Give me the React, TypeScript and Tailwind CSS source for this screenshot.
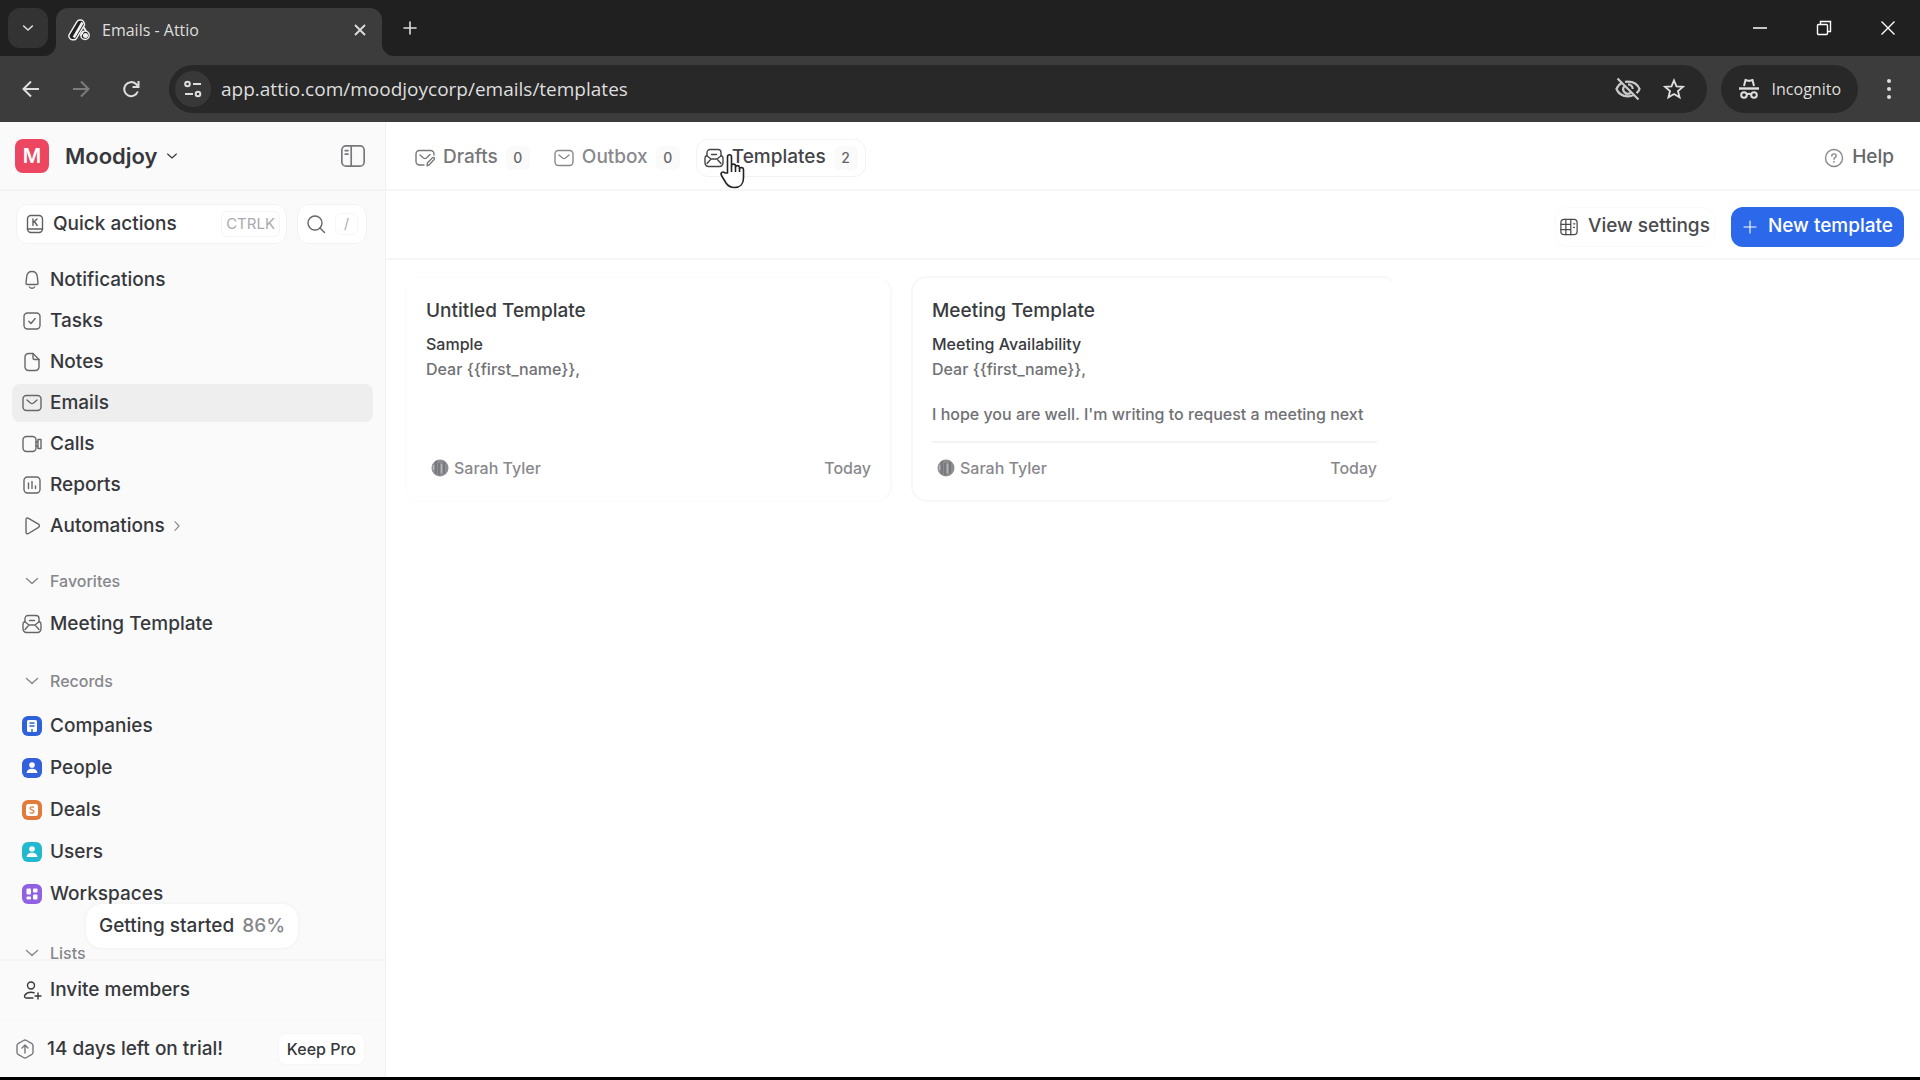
import React from 'react';

type IconName =
    | 'bell' | 'task' | 'note' | 'mail' | 'call' | 'report' | 'play' | 'template'
    | 'draft' | 'search' | 'help' | 'panel' | 'settings' | 'quick' | 'invite' | 'trial'
    | 'chevronDown' | 'chevronRight' | 'plus';

// All outline icons share a 20x20 grid
const iconShapes: Record<IconName, React.ReactNode> = {
    bell: <path d="M10 1.500c-3 0-5 2.200-5.300 5L4 13c-.1 1 .3 1.500 1 1.500h10c.7 0 1.100-.5 1-1.500l-.7-6.500c-.3-2.800-2.300-5-5.300-5ZM7.500 17c.6 1 1.500 1.300 2.500 1.300s1.900-.3 2.500-1.300" />,
    task: <><rect x="2" y="2" width="16" height="16" rx="3.500" /><path d="m6.800 10.300 2.200 2.200 4.200-5" /></>,
    note: <><path d="M11 1.500H6.500a3.500 3.500 0 0 0-3.500 3.500v10a3.500 3.500 0 0 0 3.500 3.500h7a3.500 3.500 0 0 0 3.500-3.500V7.500Z" /><path d="M11 1.500V6c0 1 .5 1.500 1.500 1.500H17" /></>,
    mail: <><rect x="1" y="2.500" width="18" height="15" rx="3.500" /><path d="m5 7 3.500 3c1 .8 2 .8 3 0L15 7" /></>,
    call: <><rect x="1" y="2.500" width="13" height="15" rx="3.500" /><path d="m14 8.500 2-1.500v6l-2-1.500M16 5.500h3v9h-3Z" /></>,
    report: <><rect x="2" y="2" width="16" height="16" rx="3.500" /><path d="M6.500 8v5.500M10 6.500v7M13.500 11v2.500" /></>,
    play: <path d="M4 3.800c0-1.500 1.200-2.200 2.500-1.500l10 5.900c1.300.8 1.300 2.300 0 3.100l-10 6.200c-1.300.8-2.500 0-2.500-1.500Z" />,
    template: <><path d="M3 8V4.500A3 3 0 0 1 6 1.500h8a3 3 0 0 1 3 3V8" /><path d="M2.500 7.500 7 11h6l4.500-3.500c.9.5 1.500 1.500 1.500 2.700V15a3.500 3.500 0 0 1-3.500 3.500h-11A3.500 3.500 0 0 1 1 15v-4.800c0-1.200.6-2.200 1.500-2.700ZM7 11l-4 4.500M13 11l4 4.500M7.500 6.500h5" /></>,
    draft: <><path d="M9 17H4.500A3.500 3.500 0 0 1 1 13.500V6a3.500 3.500 0 0 1 3.500-3.500h11A3.500 3.500 0 0 1 19 6v1" /><path d="m5 7 3.500 3c1 .8 2 .8 3 0L15 6.500M12 17.800l.5-3 5-5c1.200-1 2.700.5 1.700 1.700l-5 5.300Z" /></>,
    search: <><circle cx="9" cy="9" r="7" /><path d="m14 14 4.500 4.500" /></>,
    help: <><circle cx="10" cy="10" r="8.500" /><path d="M7.800 8c0-1.300 1-2.100 2.200-2.100s2.200.8 2.200 2c0 1.400-2.200 1.600-2.200 3.300M10 13.500v.8" /></>,
    panel: <><rect x=".7" y="1.500" width="18.600" height="17" rx="3.500" /><path d="M8.500 1.500v17M3.500 5.500h2.300M3.500 8.500h2.300" /></>,
    settings: <><rect x="1" y="1.500" width="18" height="17" rx="3.500" /><path d="M6.500 1.500v17M12 1.500v17M1 7h11M1 13h11M15 6.500h1.500M15 10.500h1" /></>,
    quick: <><rect x="2.500" y="1.500" width="15" height="17" rx="3.500" /><path d="M2.500 15h15M8 5v6.500M12 5 8 8.800M9.500 7.500l2.700 4" /></>,
    invite: <><circle cx="9" cy="5.500" r="3.500" /><path d="M11 18H4.500C2.500 18 2 16.500 3 15c1.200-1.800 3.500-2.800 6-2.800 1.300 0 2.300.2 3.200.6M16 13v6M13 16h6" /></>,
    trial: <><path d="M8.500 1.500a3 3 0 0 1 3 0l5 2.800A3 3 0 0 1 18 7v6a3 3 0 0 1-1.500 2.700l-5 2.800a3 3 0 0 1-3 0l-5-2.800A3 3 0 0 1 2 13V7a3 3 0 0 1 1.500-2.700Z" /><path d="M10 14V6.500M7 9l3-3 3 3" /></>,
    chevronDown: <path d="m4.500 7.500 5.500 5 5.500-5" />,
    chevronRight: <path d="m7.500 4.500 5 5.500-5 5.500" />,
    plus: <path d="M10 2.500v15M2.500 10h15" />,
};

const Icon: React.FC<{ name: IconName; className?: string }> = ({ name, className = 'size-5' }) => (
    <svg
        className={`shrink-0 ${className}`}
        viewBox="0 0 20 20"
        fill="none"
        stroke="currentColor"
        strokeWidth={1.4}
        strokeLinecap="round"
        strokeLinejoin="round"
        aria-hidden="true"
    >
        {iconShapes[name]}
    </svg>
);

const navItems: { label: string; icon: IconName; active?: boolean; nested?: boolean }[] = [
    { label: 'Notifications', icon: 'bell' },
    { label: 'Tasks', icon: 'task' },
    { label: 'Notes', icon: 'note' },
    { label: 'Emails', icon: 'mail', active: true },
    { label: 'Calls', icon: 'call' },
    { label: 'Reports', icon: 'report' },
    { label: 'Automations', icon: 'play', nested: true },
];

const person = <><circle cx="10" cy="7" r="2.800" /><path d="M4.500 15c.3-2.800 2.500-4.300 5.500-4.300s5.200 1.500 5.500 4.300Z" /></>;

const records = [
    {
        label: 'Companies',
        color: 'bg-[#2f62da]',
        glyph: <><rect x="5" y="4" width="10" height="12" rx="1.500" /><path d="M7.500 7h5M7.500 10h5M10 13v3" stroke="#2f62da" strokeWidth="1.400" /></>,
    },
    { label: 'People', color: 'bg-[#3560dc]', glyph: person },
    {
        label: 'Deals',
        color: 'bg-[#e07b3c]',
        glyph: <><rect x="4" y="4" width="12" height="12" rx="2.500" /><path d="M12 7.500c-.8-1-4-.9-4 .8 0 2 4 1.200 4 3.200 0 1.800-3.200 2-4.200.8" fill="none" stroke="#e07b3c" strokeWidth="1.300" /></>,
    },
    { label: 'Users', color: 'bg-[#22b8cf]', glyph: person },
    {
        label: 'Workspaces',
        color: 'bg-[#9061e0]',
        glyph: <><rect x="4.500" y="4.500" width="4.500" height="6" rx="1" /><rect x="11" y="4.500" width="4.500" height="4" rx="1" /><rect x="4.500" y="12.500" width="4.500" height="3" rx="1" /><rect x="11" y="10.500" width="4.500" height="5" rx="1" /></>,
    },
];

const tabs: { label: string; icon: IconName; count: number; style: string }[] = [
    { label: 'Drafts', icon: 'draft', count: 0, style: 'border-transparent text-[#77787b]' },
    { label: 'Outbox', icon: 'mail', count: 0, style: 'border-transparent text-[#88898c]' },
    { label: 'Templates', icon: 'template', count: 2, style: 'border-[#f3f3f4] text-[#444548]' },
];

const templates = [
    { title: 'Untitled Template', subject: 'Sample', body: '', card: 'border-[#fdfdfd] border-r-[#f9f9f9]', rule: 'border-transparent' },
    {
        title: 'Meeting Template',
        subject: 'Meeting Availability',
        body: "I hope you are well. I'm writing to request a meeting next",
        card: 'border-[#f8f8f8] border-r-[#fefefe]',
        rule: 'border-[#f3f3f3]',
    },
];

const BrowserChrome: React.FC = () => (
    <header className="shrink-0 bg-[#202020] font-['Open_Sans','Noto_Sans',sans-serif] text-[#dedede]">
        <div className="flex h-14 items-end pl-2">
            <button aria-label="Search tabs" className="mb-2 flex size-10 items-center justify-center rounded-xl bg-[#333333]">
                <Icon name="chevronDown" className="size-4 stroke-2" />
            </button>
            <div className="relative ml-2 flex h-12 w-[326px] items-center rounded-t-xl bg-[#3c3c3c] px-3 pb-2 pt-1">
                {/* Flared feet of the active tab */}
                <svg className="absolute -left-3 bottom-0 size-3" viewBox="0 0 12 12" fill="#3c3c3c" aria-hidden="true"><path d="M12 0v12H0A12 12 0 0 0 12 0Z" /></svg>
                <svg className="absolute -right-3 bottom-0 size-3" viewBox="0 0 12 12" fill="#3c3c3c" aria-hidden="true"><path d="M0 0v12h12A12 12 0 0 1 0 0Z" /></svg>
                <svg className="mr-3 size-[22px] shrink-0" viewBox="0 0 22 22" fill="#202020" stroke="#f1f1f1" strokeWidth="1.400" strokeLinejoin="round" aria-hidden="true">
                    <path d="M8.800 2.800c.9-1.500 1.600-1.800 2.900-1.800h1.200c1.200 0 2 .5 2.600 1.600l.8 1.600c.4.900.3 1.700-.2 2.500L8.500 19.300c-.6 1-1.300 1.500-2.500 1.500H4.300c-1.200 0-1.900-.4-2.500-1.400l-.6-1.100c-.5-1-.5-1.800 0-2.700Z" />
                    <path d="M14.500 3.500 5.800 18.500" strokeWidth="2.600" />
                    <circle cx="17" cy="16.300" r="4.200" />
                    <path d="m15.500 8 2.600 4.200M12.800 16.500 15.500 12" strokeWidth="1.800" />
                    <circle cx="17.500" cy="16.500" r="1.800" fill="#f1f1f1" />
                </svg>
                <span className="flex-1 text-base">Emails - Attio</span>
                <button aria-label="Close tab" className="-mr-1 flex size-7 items-center justify-center">
                    <svg className="size-3" viewBox="0 0 12 12" stroke="currentColor" strokeWidth="1.800"><path d="m1 1 10 10M11 1 1 11" /></svg>
                </button>
            </div>
            <button aria-label="New tab" className="mb-2 ml-2 flex size-10 shrink-0 items-center justify-center">
                <Icon name="plus" className="size-4 stroke-2" />
            </button>
            <div className="ml-auto flex h-14 items-center">
                <button aria-label="Minimize" className="flex h-full w-16 items-center justify-center">
                    <svg className="size-4" viewBox="0 0 16 16" stroke="#fff" strokeWidth="1.500"><path d="M1 8h14" /></svg>
                </button>
                <button aria-label="Restore" className="flex h-full w-16 items-center justify-center">
                    <svg className="size-4" viewBox="0 0 16 16" fill="none" stroke="#fff" strokeWidth="1.400"><rect x="1.500" y="4.500" width="10" height="10" rx="1" /><path d="M4.500 4V1.500h10v10H12" /></svg>
                </button>
                <button aria-label="Close" className="flex h-full w-16 items-center justify-center">
                    <svg className="size-4" viewBox="0 0 16 16" stroke="#fff" strokeWidth="1.400"><path d="m1.500 1.500 13 13M14.500 1.500l-13 13" /></svg>
                </button>
            </div>
        </div>
        <div className="flex h-[66px] items-center bg-[#3c3c3c] pl-[19px]">
            <button aria-label="Back" className="flex size-6 items-center justify-center">
                <svg className="size-[18px]" viewBox="0 0 18 18" fill="none" stroke="currentColor" strokeWidth="2"><path d="M17 9H2M9 1.500 1.500 9 9 16.500" /></svg>
            </button>
            <button aria-label="Forward" className="ml-[26px] flex size-6 items-center justify-center text-[#7c7c7c]">
                <svg className="size-[18px]" viewBox="0 0 18 18" fill="none" stroke="currentColor" strokeWidth="2"><path d="M1 9h15M9 1.500 16.500 9 9 16.500" /></svg>
            </button>
            <button aria-label="Reload" className="ml-[26px] flex size-6 items-center justify-center">
                <svg className="size-[18px]" viewBox="0 0 18 18" fill="none" stroke="currentColor" strokeWidth="2"><path d="M15.800 11.500A7 7 0 1 1 14 4l2.500 2.500M16.500 1v6h-6" /></svg>
            </button>
            <div className="ml-[26px] flex h-12 flex-1 items-center rounded-full bg-[#282828] pl-1.5">
                <button aria-label="Site information" className="flex size-9 items-center justify-center rounded-full bg-[#383838]">
                    <svg className="size-[18px]" viewBox="0 0 18 18" fill="none" stroke="currentColor" strokeWidth="2"><circle cx="3.500" cy="4" r="2.300" /><path d="M9 4h8M1 14h8" /><circle cx="14" cy="14" r="2.300" /></svg>
                </button>
                <input aria-label="Address" className="ml-2.5 min-w-0 flex-1 bg-transparent text-[19px] outline-none" defaultValue="app.attio.com/moodjoycorp/emails/templates" />
                <button aria-label="Third-party cookies blocked" className="mr-[22px]">
                    <svg className="size-[26px]" viewBox="0 0 26 26" fill="none" stroke="#c9c9c9" strokeWidth="2.200">
                        <path d="M7.500 6.500C4.500 8 2.500 10.300 1.500 13c1.800 4.500 6 7.300 11.500 7.300 2 0 3.800-.4 5.300-1.200M10 5.900c1-.2 2-.3 3-.3 5.500 0 9.700 2.900 11.500 7.400-.6 1.600-1.600 3-3 4.200M2.500 2.500l21 21M9 10.500a4.700 4.700 0 0 0 6.500 6.500M13 8.300a4.700 4.700 0 0 1 4.700 4.700" />
                    </svg>
                </button>
                <button aria-label="Bookmark this tab" className="mr-[22px]">
                    <svg className="size-[22px]" viewBox="0 0 22 22" fill="none" stroke="currentColor" strokeWidth="1.900"><path d="m11 2.500 2.500 5.900 6.400.5-4.900 4.200 1.500 6.200L11 16l-5.500 3.300L7 13.100 2.100 8.900l6.400-.5Z" /></svg>
                </button>
            </div>
            <div className="ml-3.5 flex h-12 items-center gap-3 rounded-full bg-[#282828] px-[17px]">
                <svg className="size-[22px]" viewBox="0 0 22 22" fill="none" stroke="currentColor" strokeWidth="2" aria-hidden="true">
                    <path d="m6 8 1.500-6 3.500 1 3.500-1L16 8" />
                    <path d="M1 10.500h20" strokeWidth="2.400" />
                    <circle cx="6" cy="17" r="2.800" />
                    <circle cx="16" cy="17" r="2.800" />
                    <path d="M8.800 16.500c1.300-.9 3.100-.9 4.400 0" />
                </svg>
                <span className="text-base">Incognito</span>
            </div>
            <button aria-label="Browser menu" className="mx-[11px] flex h-10 w-10 items-center justify-center">
                <svg className="h-5 w-1" viewBox="0 0 4 20" fill="currentColor"><circle cx="2" cy="2" r="2" /><circle cx="2" cy="10" r="2" /><circle cx="2" cy="18" r="2" /></svg>
            </button>
        </div>
    </header>
);

const SectionHeading: React.FC<{ label: string }> = ({ label }) => (
    <button className="flex h-8 items-center gap-2 pl-[22px] text-base font-medium text-[#86878a]">
        <Icon name="chevronDown" className="size-5" />
        {label}
    </button>
);

const Sidebar: React.FC = () => (
    <aside className="relative flex w-[386px] shrink-0 flex-col border-r border-[#f1f1f2] bg-[#fafafb] text-[#37383b]">
        <div className="flex h-[69px] shrink-0 items-center border-b-2 border-[#f4f4f5] pl-[15px] pr-5 pt-px">
            <span className="flex size-[34px] items-center justify-center rounded-lg bg-[#ec4661] text-xl font-semibold text-white">M</span>
            <button className="ml-4 flex items-center gap-1.5 text-[22px] font-semibold">
                Moodjoy
                <Icon name="chevronDown" className="size-4" />
            </button>
            <button aria-label="Toggle sidebar" className="ml-auto text-[#77787b]">
                <Icon name="panel" className="size-6" />
            </button>
        </div>

        <div className="flex shrink-0 items-center gap-2.5 pt-[13px] pb-[17px] pl-4 pr-[18px]">
            <button className="flex h-10 flex-1 items-center rounded-xl border border-[#f2f2f3] bg-white pl-2 pr-1.5">
                <Icon name="quick" className="size-5 text-[#5f6063]" />
                <span className="ml-2 text-[19px] font-medium">Quick actions</span>
                <kbd className="ml-auto rounded-md border border-[#f4f4f5] px-1 py-0.5 font-[Inter,sans-serif] text-[15px] leading-5 text-[#a9aaad]">CTRLK</kbd>
            </button>
            <button aria-label="Search" className="flex h-10 w-[70px] items-center justify-between rounded-xl border border-[#f2f2f3] bg-white pl-2 pr-2 text-[#66676a]">
                <Icon name="search" className="size-5" />
                <kbd className="rounded-md border border-[#f6f6f7] px-2 font-[Inter,sans-serif] text-sm leading-5 text-[#a9aaad]">/</kbd>
            </button>
        </div>

        <div className="min-h-0 flex-1 overflow-hidden">
            <nav className="flex flex-col gap-[3px] px-3">
                {navItems.map((item) => (
                    <a
                        key={item.label}
                        href={`#${item.label.toLowerCase()}`}
                        className={`flex h-[38px] items-center rounded-lg pl-2.5 text-[19px] font-medium ${item.active ? 'bg-[#eeeeef]' : ''}`}
                    >
                        <Icon name={item.icon} className="size-5 text-[#66676a]" />
                        <span className="ml-2">{item.label}</span>
                        {item.nested && <Icon name="chevronRight" className="ml-1 size-4 text-[#88898c]" />}
                    </a>
                ))}
            </nav>

            <div className="pt-5">
                <SectionHeading label="Favorites" />
                <a href="#meeting-template" className="mt-2 flex h-[38px] items-center gap-2 pl-[22px] text-[19px] font-medium">
                    <Icon name="template" className="size-5 text-[#66676a]" />
                    Meeting Template
                </a>
            </div>

            <div className="pt-[22px]">
                <SectionHeading label="Records" />
                <div className="mt-2 flex flex-col">
                    {records.map((record) => (
                        <a key={record.label} href={`#${record.label.toLowerCase()}`} className="flex h-[42px] items-center gap-2 pl-[22px] text-[19px] font-medium">
                            <span className={`size-5 rounded-md ${record.color}`}>
                                <svg viewBox="0 0 20 20" fill="#fff" aria-hidden="true">{record.glyph}</svg>
                            </span>
                            {record.label}
                        </a>
                    ))}
                </div>
            </div>

            <div className="pt-[22px]">
                <SectionHeading label="Lists" />
            </div>
        </div>

        <div className="shrink-0 border-t-2 border-[#f4f4f5]">
            <button className="flex h-[58px] w-full items-center gap-2 pl-[22px] text-[19px] font-medium">
                <Icon name="invite" className="size-5" />
                Invite members
            </button>
            <div className="flex h-[58px] items-center border-t border-[#f6f6f7] pl-[15px] pr-5 pt-px">
                <Icon name="trial" className="size-5 text-[#77787b]" />
                <span className="ml-3 text-[19px] font-medium">14 days left on trial!</span>
                <button className="ml-auto h-8 rounded-lg border border-[#f6f6f7] bg-white px-2 text-base font-medium">Keep Pro</button>
            </div>
        </div>

        {/* Onboarding progress floats over the record list */}
        <button className="absolute bottom-[129px] left-[86px] flex h-11 items-center gap-2 whitespace-nowrap rounded-2xl bg-white px-[13px] text-[19px] font-medium shadow-[0_0_4px_rgba(0,0,0,0.06)]">
            Getting started
            <span className="text-[#86878a]">86%</span>
        </button>
    </aside>
);

const TemplateCard: React.FC<(typeof templates)[number]> = ({ title, subject, body, card, rule }) => (
    <article className={`flex h-[226px] w-[487px] flex-col rounded-2xl border-2 px-[19px] pt-[21px] font-medium ${card}`}>
        <h2 className="text-[19px] leading-6 text-[#3a3b3e]">{title}</h2>
        <h3 className="mt-[9px] text-base leading-6 text-[#3a3b3e]">{subject}</h3>
        <p className="mt-px text-base leading-6 text-[#707174]">{'Dear {{first_name}},'}</p>
        <p className="mt-[21px] h-6 truncate text-base leading-6 text-[#707174]">{body}</p>
        <footer className={`mt-[15px] flex h-[52px] items-center border-t-2 pl-[5px] text-base text-[#88898c] ${rule}`}>
            <svg className="mr-[5px] size-[18px]" viewBox="0 0 18 18" aria-hidden="true">
                <circle cx="9" cy="9" r="8.500" fill="#8b8d90" />
                <path d="M5 2v13M8 4v12M13 3v11" stroke="#717376" strokeWidth="1.500" />
                <path d="M10.500 5v9M2.500 6v5" stroke="#b3b5b8" strokeWidth="1.500" />
            </svg>
            Sarah Tyler
            <span className="ml-auto">Today</span>
        </footer>
    </article>
);

const App: React.FC = () => (
    <div className="flex h-screen flex-col border-b-[3px] border-black bg-white font-[Inter,sans-serif]">
        <BrowserChrome />
        <div className="flex min-h-0 flex-1">
            <Sidebar />
            <main className="min-w-0 flex-1">
                <div className="flex h-[69px] items-center gap-2 border-b-2 border-[#f6f6f7] pl-[21px] pr-[26px] pt-1">
                    {tabs.map((tab) => (
                        <button key={tab.label} className={`flex h-[38px] items-center rounded-xl border px-[7px] text-[19px] font-medium ${tab.style}`}>
                            <Icon name={tab.icon} className="size-5" />
                            <span className="ml-2">{tab.label}</span>
                            <span className="ml-2 flex size-6 items-center justify-center rounded-md bg-[#fafafa] text-sm text-[#66676a]">{tab.count}</span>
                        </button>
                    ))}
                    <a href="#help" className="ml-auto flex items-center gap-2 text-[19px] font-medium text-[#66676a]">
                        <Icon name="help" className="size-5 text-[#88898c]" />
                        Help
                    </a>
                </div>
                <div className="flex h-[69px] items-center justify-end gap-4 border-b-2 border-[#f6f6f7] pr-4 pt-1">
                    <button className="flex h-10 items-center gap-2.5 rounded-xl border border-[#fafafa] px-1 text-[19px] font-medium text-[#4a4b4e]">
                        <Icon name="settings" className="size-[18px]" />
                        View settings
                    </button>
                    <button className="flex h-10 items-center gap-2.5 rounded-xl bg-[#2b68ea] px-[11px] text-[19px] font-medium text-white">
                        <Icon name="plus" className="size-4" />
                        New template
                    </button>
                </div>
                <div className="flex flex-wrap gap-[19px] px-[19px] pt-4">
                    {templates.map((template) => (
                        <TemplateCard key={template.title} {...template} />
                    ))}
                </div>
            </main>
        </div>

        {/* Hand pointer resting on the Templates tab */}
        <svg className="pointer-events-none absolute left-[719px] top-[153px] h-9 w-7" viewBox="0 0 28 36" fill="#fff" stroke="#222" strokeWidth="1.600" strokeLinejoin="round" aria-hidden="true">
            <path d="M8.500 20V4c0-3 4-3 4 0v9c0-2.500 4-2.500 4 0v1c.3-2 4-1.800 4 .7v1c.5-1.700 4-1.500 4 .8V25c0 6-3.500 9.500-9 9.500-4 0-6.500-1.500-8.500-4.500l-4.500-7.500c-1.500-3 1.500-4.500 3.500-2.500Z" />
            <path d="M12.500 13v6M16.500 14v5M20.500 15.500V19" />
        </svg>
    </div>
);

export default App;
